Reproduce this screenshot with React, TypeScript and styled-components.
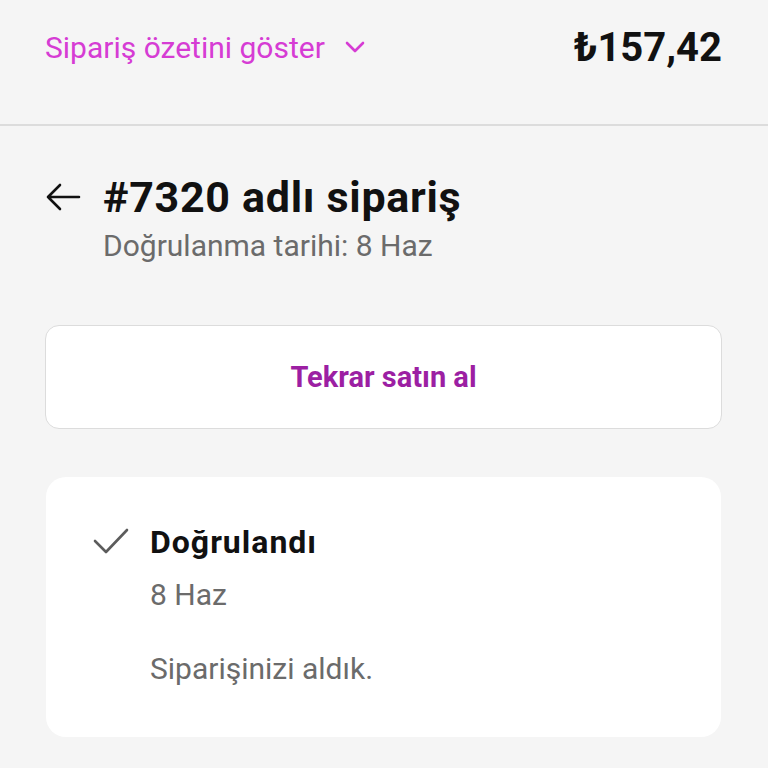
import React from "react";
import styled, { createGlobalStyle } from "styled-components";

const GlobalStyle = createGlobalStyle`
  html, body {
    margin: 0;
    padding: 0;
    background: #f5f5f5;
    font-family: Roboto, "Noto Sans", sans-serif;
  }
`;

const Page = styled.div`
  width: 768px;
  min-height: 768px;
  background: #f5f5f5;
`;

const SummaryBar = styled.div`
  height: 126px;
  box-sizing: border-box;
  padding: 0 46px 30px 45px;
  display: flex;
  align-items: center;
  justify-content: space-between;
  border-bottom: 2px solid #dcdcdc;
`;

const SummaryToggle = styled.button`
  display: flex;
  align-items: center;
  gap: 20px;
  border: none;
  background: none;
  padding: 0;
  color: #d63cd4;
  font-family: Roboto, sans-serif;
  font-size: 30px;
  cursor: pointer;
`;

const Price = styled.div`
  font-size: 40px;
  font-weight: 700;
  color: #111;
`;

const Content = styled.div`
  padding: 46px 46px 0 45px;
`;

const TitleRow = styled.div`
  display: flex;
  align-items: center;
  gap: 22px;
`;

const BackButton = styled.button`
  border: none;
  background: none;
  padding: 0;
  display: flex;
  cursor: pointer;
`;

const Title = styled.h1`
  margin: 0;
  font-size: 43px;
  font-weight: 700;
  letter-spacing: 0.7px;
  color: #111;
  line-height: 50px;
`;

const Subtitle = styled.div`
  margin: 6px 0 0 58px;
  font-size: 30px;
  line-height: 36px;
  color: #6b6b6b;
`;

const BuyAgain = styled.button`
  display: block;
  width: 100%;
  height: 104px;
  margin-top: 61px;
  border: 1.5px solid #dcdcdc;
  border-radius: 14px;
  background: #fff;
  color: #9c1fa3;
  font-family: Roboto, sans-serif;
  font-size: 29px;
  font-weight: 700;
  cursor: pointer;
`;

const StatusCard = styled.div`
  margin: 48px 1px 0;
  background: #fff;
  border-radius: 20px;
  padding: 45px 46px 50px 46px;
  display: grid;
  grid-template-columns: 40px 1fr;
  column-gap: 18px;
`;

const StatusIcon = styled.div`
  padding-top: 5px;
`;

const StatusBody = styled.div`
  display: flex;
  flex-direction: column;
`;

const StatusTitle = styled.div`
  font-size: 32px;
  font-weight: 700;
  letter-spacing: 1px;
  color: #111;
  line-height: 40px;
`;

const StatusText = styled.div<{ $gap: number }>`
  margin-top: ${(p) => p.$gap}px;
  font-size: 30px;
  color: #6b6b6b;
  line-height: 36px;
`;

export default function App() {
  return (
    <Page>
      <GlobalStyle />
      <SummaryBar>
        <SummaryToggle>
          Sipariş özetini göster
          <svg width="20" height="12" viewBox="0 0 20 12">
            <path d="M2 2l8 8 8-8" fill="none" stroke="#d63cd4" strokeWidth="2.6" strokeLinecap="round" strokeLinejoin="round" />
          </svg>
        </SummaryToggle>
        <Price>₺157,42</Price>
      </SummaryBar>
      <Content>
        <TitleRow>
          <BackButton aria-label="Geri">
            <svg width="36" height="28" viewBox="0 0 36 28">
              <path d="M34 14H3M15 2L3 14l12 12" fill="none" stroke="#111" strokeWidth="2.6" strokeLinecap="round" strokeLinejoin="round" />
            </svg>
          </BackButton>
          <Title>#7320 adlı sipariş</Title>
        </TitleRow>
        <Subtitle>Doğrulanma tarihi: 8 Haz</Subtitle>
        <BuyAgain>Tekrar satın al</BuyAgain>
        <StatusCard>
          <StatusIcon>
            <svg width="38" height="28" viewBox="0 0 38 28">
              <path d="M3 14l11 11L35 3" fill="none" stroke="#5c5c5c" strokeWidth="2.6" strokeLinecap="round" strokeLinejoin="round" />
            </svg>
          </StatusIcon>
          <StatusBody>
            <StatusTitle>Doğrulandı</StatusTitle>
            <StatusText $gap={15}>8 Haz</StatusText>
            <StatusText $gap={38}>Siparişinizi aldık.</StatusText>
          </StatusBody>
        </StatusCard>
      </Content>
    </Page>
  );
}
